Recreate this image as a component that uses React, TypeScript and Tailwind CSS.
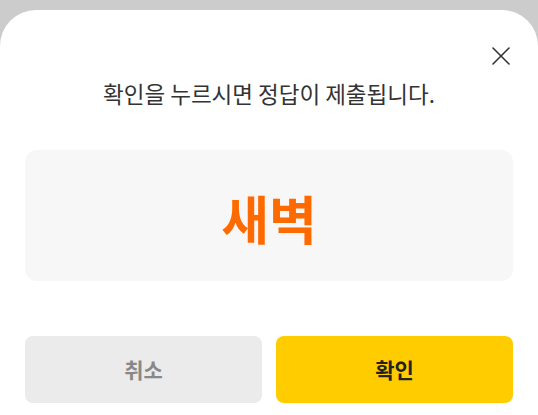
export default function App() {
  return (
    <div
      className="h-[415px] w-[538px] overflow-hidden bg-[#cccccc] pt-[10px]"
      style={{ fontFamily: '"Noto Sans CJK KR", "Noto Sans", sans-serif' }}
    >
      <div className="relative flex h-[405px] flex-col rounded-t-[36px] bg-white px-[25px]">
        <button className="absolute right-[27px] top-[36px] flex h-[20px] w-[20px] items-center justify-center text-[#333333]">
          <svg width="20" height="20" viewBox="0 0 20 20" fill="none" stroke="currentColor" strokeWidth="1.6" strokeLinecap="round">
            <path d="M2 2L18 18M18 2L2 18" />
          </svg>
        </button>

        <p className="mt-[68px] text-center text-[22.5px] leading-[30px] text-[#333333]">
          확인을 누르시면 정답이 제출됩니다.
        </p>

        <div className="mt-[42px] flex h-[131px] items-center justify-center rounded-[12px] bg-[#f7f7f7]">
          <span className="mt-[5px] text-[52px] font-bold leading-none text-[#ff6a00]">새벽</span>
        </div>

        <div className="mt-[55px] grid grid-cols-2 gap-[14px]">
          <button className="flex h-[67px] items-center justify-center rounded-[8px] bg-[#ebebeb] text-[21px] font-bold text-[#888888]">
            취소
          </button>
          <button className="flex h-[67px] items-center justify-center rounded-[8px] bg-[#ffcc00] text-[21px] font-bold text-[#222222]">
            확인
          </button>
        </div>
      </div>
    </div>
  );
}
